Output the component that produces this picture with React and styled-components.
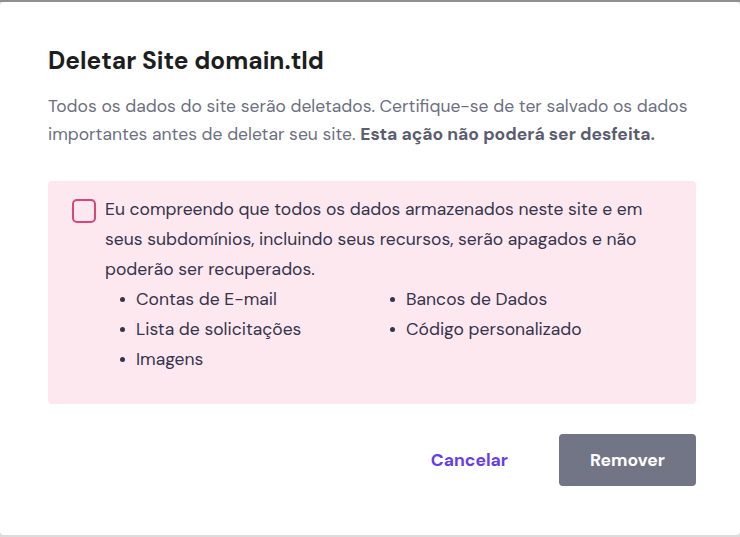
import React from 'react';
import styled, { createGlobalStyle } from 'styled-components';

const GlobalStyle = createGlobalStyle`
  html, body {
    margin: 0;
    padding: 0;
    background: #dcdcdc;
  }
  body {
    font-family: "DM Sans", Inter, "Noto Sans", sans-serif;
  }
`;

const Backdrop = styled.div`
  height: 537px;
  box-sizing: border-box;
  padding-top: 2px;
  background: linear-gradient(#8f8f8f 0 2px, #dcdcdc 2px);
`;

const Modal = styled.div`
  height: 533px;
  box-sizing: border-box;
  background: #ffffff;
  border-radius: 4px;
  padding: 43px 44px 0 48px;
  display: flex;
  flex-direction: column;
`;

const Title = styled.h2`
  margin: 0;
  font-size: 24.5px;
  line-height: 32px;
  font-weight: 700;
  color: #1d1e20;
`;

const Description = styled.p`
  margin: 15px 0 0;
  font-size: 17.5px;
  line-height: 28px;
  color: #6d7081;

  strong {
    font-weight: 700;
    color: #5b5d6e;
  }
`;

const Notice = styled.div`
  margin-top: 33px;
  width: 648px;
  box-sizing: border-box;
  background: #fde8ef;
  border-radius: 4px;
  padding: 13px 24px 30px 24px;
  display: flex;
  gap: 9px;
`;

const Checkbox = styled.span`
  flex: none;
  width: 24px;
  height: 24px;
  box-sizing: border-box;
  margin-top: 5px;
  border: 2px solid #d6467a;
  border-radius: 5px;
  background: #fde8ef;
`;

const NoticeBody = styled.div`
  font-size: 17.5px;
  line-height: 30px;
  color: #36344d;
`;

const Items = styled.ul`
  margin: 0;
  padding: 0 0 0 15px;
  list-style: none;
  display: grid;
  grid-template-columns: 270px 1fr;
  grid-auto-flow: row;
`;

const Item = styled.li`
  position: relative;
  padding-left: 16px;

  &::before {
    content: '';
    position: absolute;
    left: 0;
    top: 13px;
    width: 5px;
    height: 5px;
    border-radius: 50%;
    background: #36344d;
  }
`;

const Footer = styled.div`
  margin-top: 30px;
  width: 648px;
  display: flex;
  justify-content: flex-end;
  align-items: center;
  gap: 51px;
`;

const Button = styled.button`
  font-family: inherit;
  font-size: 17.5px;
  font-weight: 700;
  border: none;
  border-radius: 4px;
  cursor: pointer;
  height: 52px;
  padding: 0 ${({ $primary }) => ($primary ? '31px' : '0')};
  min-width: ${({ $primary }) => ($primary ? '136px' : 'auto')};
  background: ${({ $primary }) => ($primary ? '#727586' : 'transparent')};
  color: ${({ $primary }) => ($primary ? '#ffffff' : '#673de6')};
`;

const items = [
  'Contas de E-mail',
  'Bancos de Dados',
  'Lista de solicitações',
  'Código personalizado',
  'Imagens',
];

export default function App() {
  return (
    <>
      <GlobalStyle />
      <Backdrop>
        <Modal>
          <Title>Deletar Site domain.tld</Title>
          <Description>
            Todos os dados do site serão deletados. Certifique-se de ter salvado os dados
            importantes antes de deletar seu site. <strong>Esta ação não poderá ser desfeita.</strong>
          </Description>
          <Notice>
            <Checkbox />
            <NoticeBody>
              Eu compreendo que todos os dados armazenados neste site e em seus subdomínios,
              incluindo seus recursos, serão apagados e não poderão ser recuperados.
              <Items>
                {items.map((item) => (
                  <Item key={item}>{item}</Item>
                ))}
              </Items>
            </NoticeBody>
          </Notice>
          <Footer>
            <Button>Cancelar</Button>
            <Button $primary>Remover</Button>
          </Footer>
        </Modal>
      </Backdrop>
    </>
  );
}
